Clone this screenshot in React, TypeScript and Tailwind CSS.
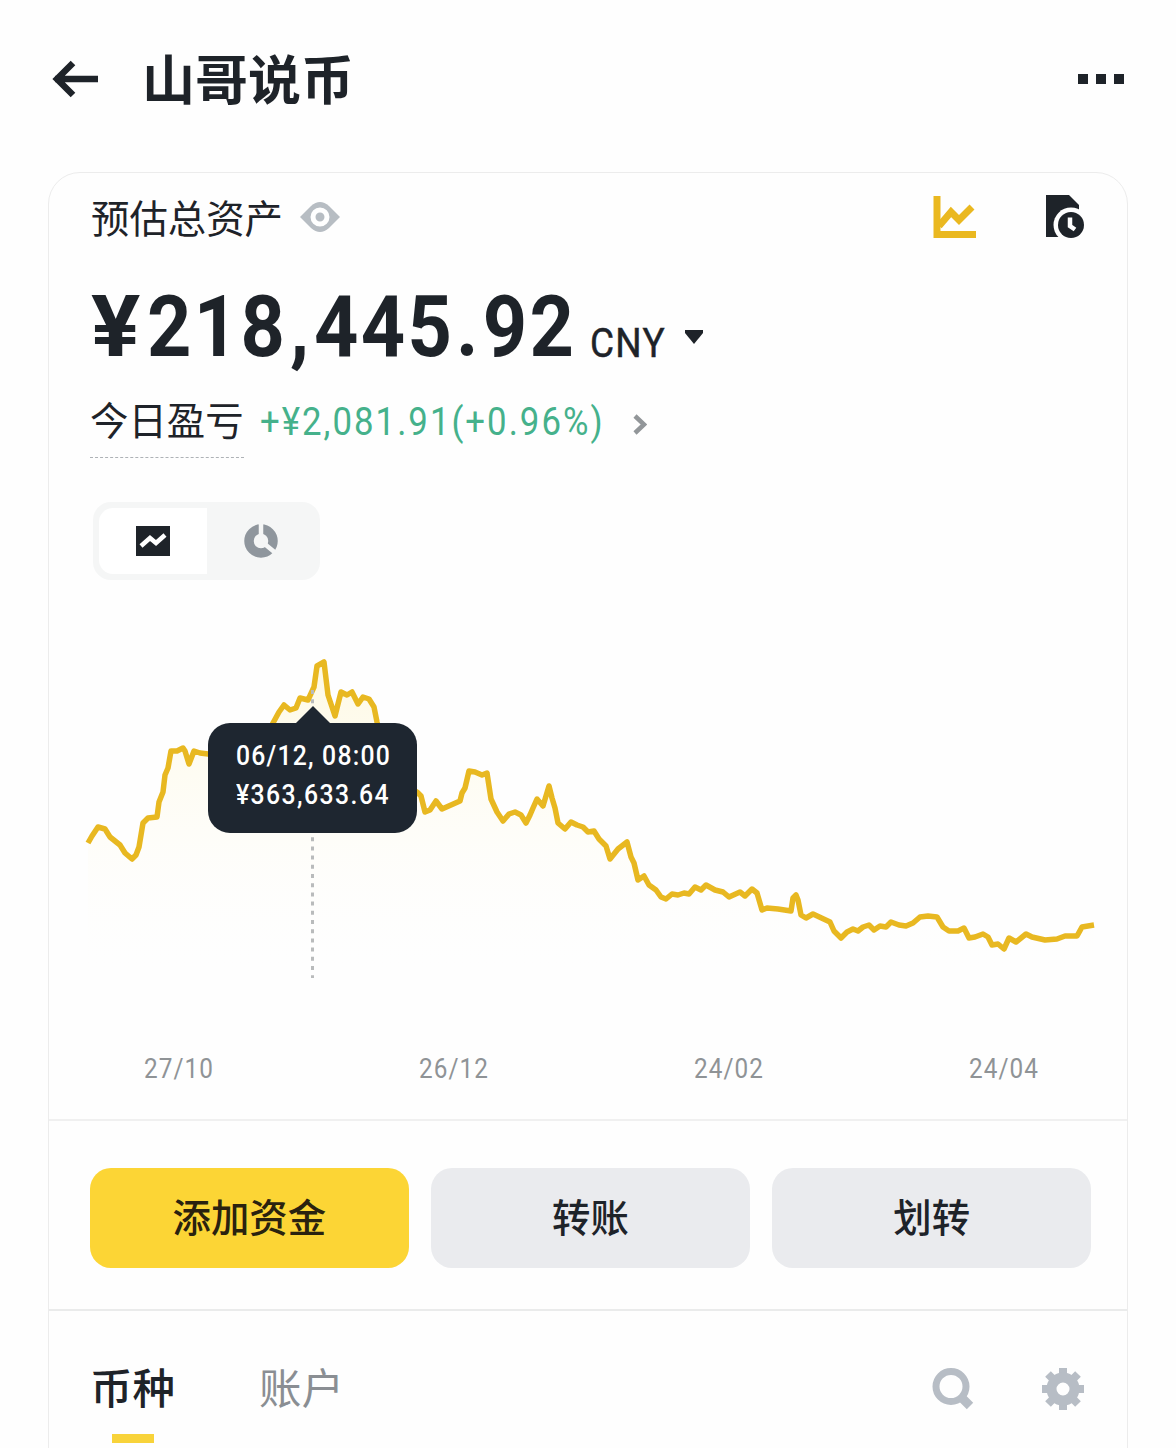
const chartPoints =
  "88,843 92,836 98,827 105,829 110,837 120,845 125,853 132,859 136,855 139,847 143,823 148,818 157,817 159,802 163,792 165,775 168,768 171,751 177,751 183,748 185,751 189,764 194,751 200,753 208,754 235,751 262,745 273,723 279,712 284,705 290,710 296,708 300,698 308,700 314,687 317,666 324,662 328,695 335,716 341,692 347,695 352,692 358,704 363,697 369,699 374,707 377,722 384,752 400,782 417,792 421,796 425,812 430,810 436,801 442,809 460,801 462,793 465,788 469,771 475,772 482,775 487,773 491,799 497,812 503,821 509,814 515,812 521,815 526,823 530,815 533,808 537,799 543,806 549,786 552,798 555,808 558,823 565,829 571,822 577,825 583,827 588,832 594,831 599,839 606,846 610,859 618,849 627,842 631,857 634,863 638,880 644,876 649,885 656,890 661,897 666,899 672,894 678,895 684,893 689,894 695,887 701,890 706,885 715,890 723,892 729,897 740,892 745,896 752,889 757,893 762,910 767,908 778,909 791,911 793,898 796,895 798,900 801,915 806,918 813,914 830,922 834,931 841,938 847,932 853,929 858,931 863,927 869,925 874,930 880,926 886,927 891,922 899,925 906,926 913,923 920,917 928,916 937,917 943,927 949,931 958,931 964,928 969,938 975,937 983,934 988,937 992,945 998,944 1004,949 1009,938 1016,942 1026,934 1032,937 1045,940 1057,939 1065,936 1077,936 1082,927 1094,925";

const dates = ["27/10", "26/12", "24/02", "24/04"];

function Header() {
  return (
    <header className="flex h-[172px] items-start pl-[52px] pr-[52px] pt-[40px]">
      <svg className="mt-[20px] h-[38px] w-[46px]" viewBox="0 0 46 38" fill="none" stroke="#1e2329" strokeWidth="6.500">
        <path d="M3 19H46M21 3L5 19L21 35" />
      </svg>
      <h1 className="ml-[44px] text-[53px] font-bold leading-[74px]">山哥说币</h1>
      <div className="ml-auto mt-[34px] flex gap-[8px]">
        <i className="h-[10px] w-[10px] bg-[#1e2329]" />
        <i className="h-[10px] w-[10px] bg-[#1e2329]" />
        <i className="h-[10px] w-[10px] bg-[#1e2329]" />
      </div>
    </header>
  );
}

function Summary() {
  return (
    <section className="pl-[42px] pr-[43px]">
      <div className="flex h-[87px] items-center">
        <span className="-mt-[2px] text-[38.4px] leading-[56px]">预估总资产</span>
        <svg className="ml-[17px] h-[30px] w-[40px]" viewBox="0 0 40 30">
          <path d="M0 15L11 4Q20 -4 29 4L40 15L29 26Q20 34 11 26Z" fill="#b7bdc3" />
          <circle cx="20" cy="15" r="7" fill="#b7bdc3" stroke="#fff" strokeWidth="5" />
        </svg>
        <svg className="ml-auto h-[42px] w-[43px]" viewBox="0 0 43 42" fill="none" stroke="#eab820">
          <path d="M4 0V38.500H43" strokeWidth="7" />
          <path d="M6 30L18 16L26 24L39 11" strokeWidth="7" />
        </svg>
        <svg className="ml-[70px] h-[44px] w-[38px]" viewBox="0 0 38 44">
          <path d="M0 0H23L33 10V42H0Z" fill="#1e2329" />
          <circle cx="25" cy="30" r="17.500" fill="#fefefe" />
          <circle cx="25" cy="30" r="13" fill="#1e2329" />
          <path d="M24 22.500V31L29 34.500" fill="none" stroke="#fefefe" strokeWidth="4.500" />
        </svg>
      </div>

      <div className="flex h-[125px] items-start font-['Roboto',sans-serif]">
        <div className="flex w-[499px] whitespace-nowrap text-[86px] font-bold leading-[134px]">
          <span className="w-[56px] shrink-0">
            <span className="inline-block origin-left scale-x-[1.070]">¥</span>
          </span>
          <span className="inline-block origin-left scale-x-[.9] tracking-[2.600px]">
            218<span className="px-[3px]">,</span>445<span className="px-[2px]">.</span>92
          </span>
        </div>
        <div className="w-[95px] shrink-0 whitespace-nowrap">
          <span className="inline-block origin-left scale-x-[.9] pt-[29px] text-[41px] leading-[108px] tracking-[1.500px] [-webkit-text-stroke:0.5px_#1e2329]">
            CNY
          </span>
        </div>
        <svg className="mt-[70px] h-[15px] w-[18px]" viewBox="0 0 18 15">
          <path d="M0 0H18V3L9 14L0 3Z" fill="#1e2329" />
        </svg>
      </div>

      <div className="flex h-[73px] items-start">
        <span className="-ml-px h-[73px] border-b border-dashed border-[#aeb2b6] text-[38.4px] leading-[66px]">今日盈亏</span>
        <div className="ml-[16px] w-[373px] whitespace-nowrap font-['Roboto',sans-serif]">
          <span className="inline-block origin-left scale-x-[.88] text-[39.500px] leading-[74px] tracking-[2.300px] text-[#45b18b]">
            +¥2,081.91(+0.96%)
          </span>
        </div>
        <svg className="mt-[29px] h-[21px] w-[14px]" viewBox="0 0 14 21" fill="none" stroke="#929699" strokeWidth="4.500">
          <path d="M2 2L11 10.500L2 19" />
        </svg>
      </div>

      <div className="ml-[2px] mt-[44px] flex h-[78px] w-[227px] rounded-[18px] bg-[#f5f6f6] p-[6px]">
        <button className="flex w-[108px] items-center justify-center rounded-l-[14px] bg-white">
          <svg className="h-[30px] w-[34px]" viewBox="0 0 34 30">
            <path d="M0 0H34V30H0Z" fill="#1e2329" />
            <path d="M5 20L14 12L20 17L29 9" fill="none" stroke="#fff" strokeWidth="4.500" />
          </svg>
        </button>
        <button className="flex w-[107px] items-center justify-center">
          <svg className="h-[34px] w-[34px]" viewBox="0 0 34 34">
            <circle cx="17" cy="17" r="12" fill="none" stroke="#8f969d" strokeWidth="9.500" />
            <path d="M17 17V-2M17 17L34 31" stroke="#f5f6f6" strokeWidth="4.500" />
          </svg>
        </button>
      </div>
    </section>
  );
}

function Chart() {
  return (
    <div className="relative h-[440px]">
      <svg className="block h-[440px] w-[1078px]" viewBox="49 580 1078 440" fill="none">
        <defs>
          <linearGradient id="area" x1="0" y1="660" x2="0" y2="980" gradientUnits="userSpaceOnUse">
            <stop offset="0" stopColor="#fef8dc" stopOpacity="0.8" />
            <stop offset="1" stopColor="#fefefe" stopOpacity="0" />
          </linearGradient>
        </defs>
        <polygon points={`88,980 ${chartPoints} 1094,980`} fill="url(#area)" />
        <polyline points={chartPoints} stroke="#e8b821" strokeWidth="5.500" strokeLinejoin="round" />
        <path d="M312.500 690V978" stroke="#b9bbbc" strokeWidth="3" strokeDasharray="4 5.200" />
      </svg>
      <div className="absolute left-[159px] top-[126px] w-[209px]">
        <svg className="mx-auto block h-[17px] w-[34px]" viewBox="0 0 34 17">
          <path d="M17 0L34 17H0Z" fill="#1e2630" />
        </svg>
        <div className="h-[110px] whitespace-nowrap rounded-[22px] bg-[#1e2630] pl-[28px] pt-[13px] font-['Roboto',sans-serif] text-[27.500px] font-medium leading-[39px] text-white">
          <p className="w-fit origin-left scale-x-[.9] tracking-[1.350px]">06/12, 08:00</p>
          <p className="w-fit origin-left scale-x-[.9] tracking-[1.600px]">¥363,633.64</p>
        </div>
      </div>
    </div>
  );
}

function Actions() {
  return (
    <div className="flex h-[190px] gap-[22.500px] border-b-2 border-[#eaebeb] pl-[41px] pr-[36px] pt-[47px] text-[38.4px] font-medium">
      <button className="h-[100px] flex-1 rounded-[21px] bg-[#fcd535] pb-[5px] text-[#2a220f]">添加资金</button>
      <button className="h-[100px] flex-1 rounded-[21px] bg-[#eaebee] pb-[5px]">转账</button>
      <button className="h-[100px] flex-1 rounded-[21px] bg-[#eaebee] pb-[5px]">划转</button>
    </div>
  );
}

function Tabs() {
  return (
    <div className="flex h-[137px] items-start pl-[41px] pr-[43px] pt-[44px] text-[42.500px] leading-[62px]">
      <div className="flex flex-col items-center font-medium">
        <span>币种</span>
        <i className="mt-[17px] h-[9px] w-[42px] bg-[#f8d33a]" />
      </div>
      <span className="ml-[84px] text-[#8a8e93]">账户</span>
      <svg className="ml-auto mt-[13px] h-[42px] w-[42px]" viewBox="0 0 42 42" fill="none" stroke="#b7bdc5">
        <circle cx="19" cy="18.500" r="15" strokeWidth="7" />
        <path d="M29 29L38 38" strokeWidth="9" />
      </svg>
      <svg className="ml-[68px] mt-[13px] h-[42px] w-[42px]" viewBox="0 0 42 42" fill="none" stroke="#b7bdc5">
        <path d="M21 0V10M21 32V42M0 21H10M32 21H42M6 6L12 12M30 30L36 36M36 6L30 12M12 30L6 36" strokeWidth="8" />
        <circle cx="21" cy="21" r="11.500" strokeWidth="10" />
      </svg>
    </div>
  );
}

export default function App() {
  return (
    <div className="h-[1448px] w-[1176px] overflow-hidden bg-[#fefefe] font-['Noto_Sans_CJK_SC',sans-serif] text-[#1e2329]">
      <Header />
      <main className="ml-[48px] h-[1300px] w-[1080px] rounded-t-[32px] border border-[#ececec]">
        <Summary />
        <Chart />
        <div className="flex h-[101px] border-b-2 border-[#f0f0f0] pt-[29px] font-['Roboto',sans-serif] text-[27px] leading-[40px] text-[#8f9396]">
          {dates.map((date) => (
            <span key={date} className="w-[275.300px] shrink-0 pl-[94.500px]">
              <span className="inline-block origin-left scale-x-[.9] tracking-[1.200px]">{date}</span>
            </span>
          ))}
        </div>
        <Actions />
        <Tabs />
      </main>
    </div>
  );
}
